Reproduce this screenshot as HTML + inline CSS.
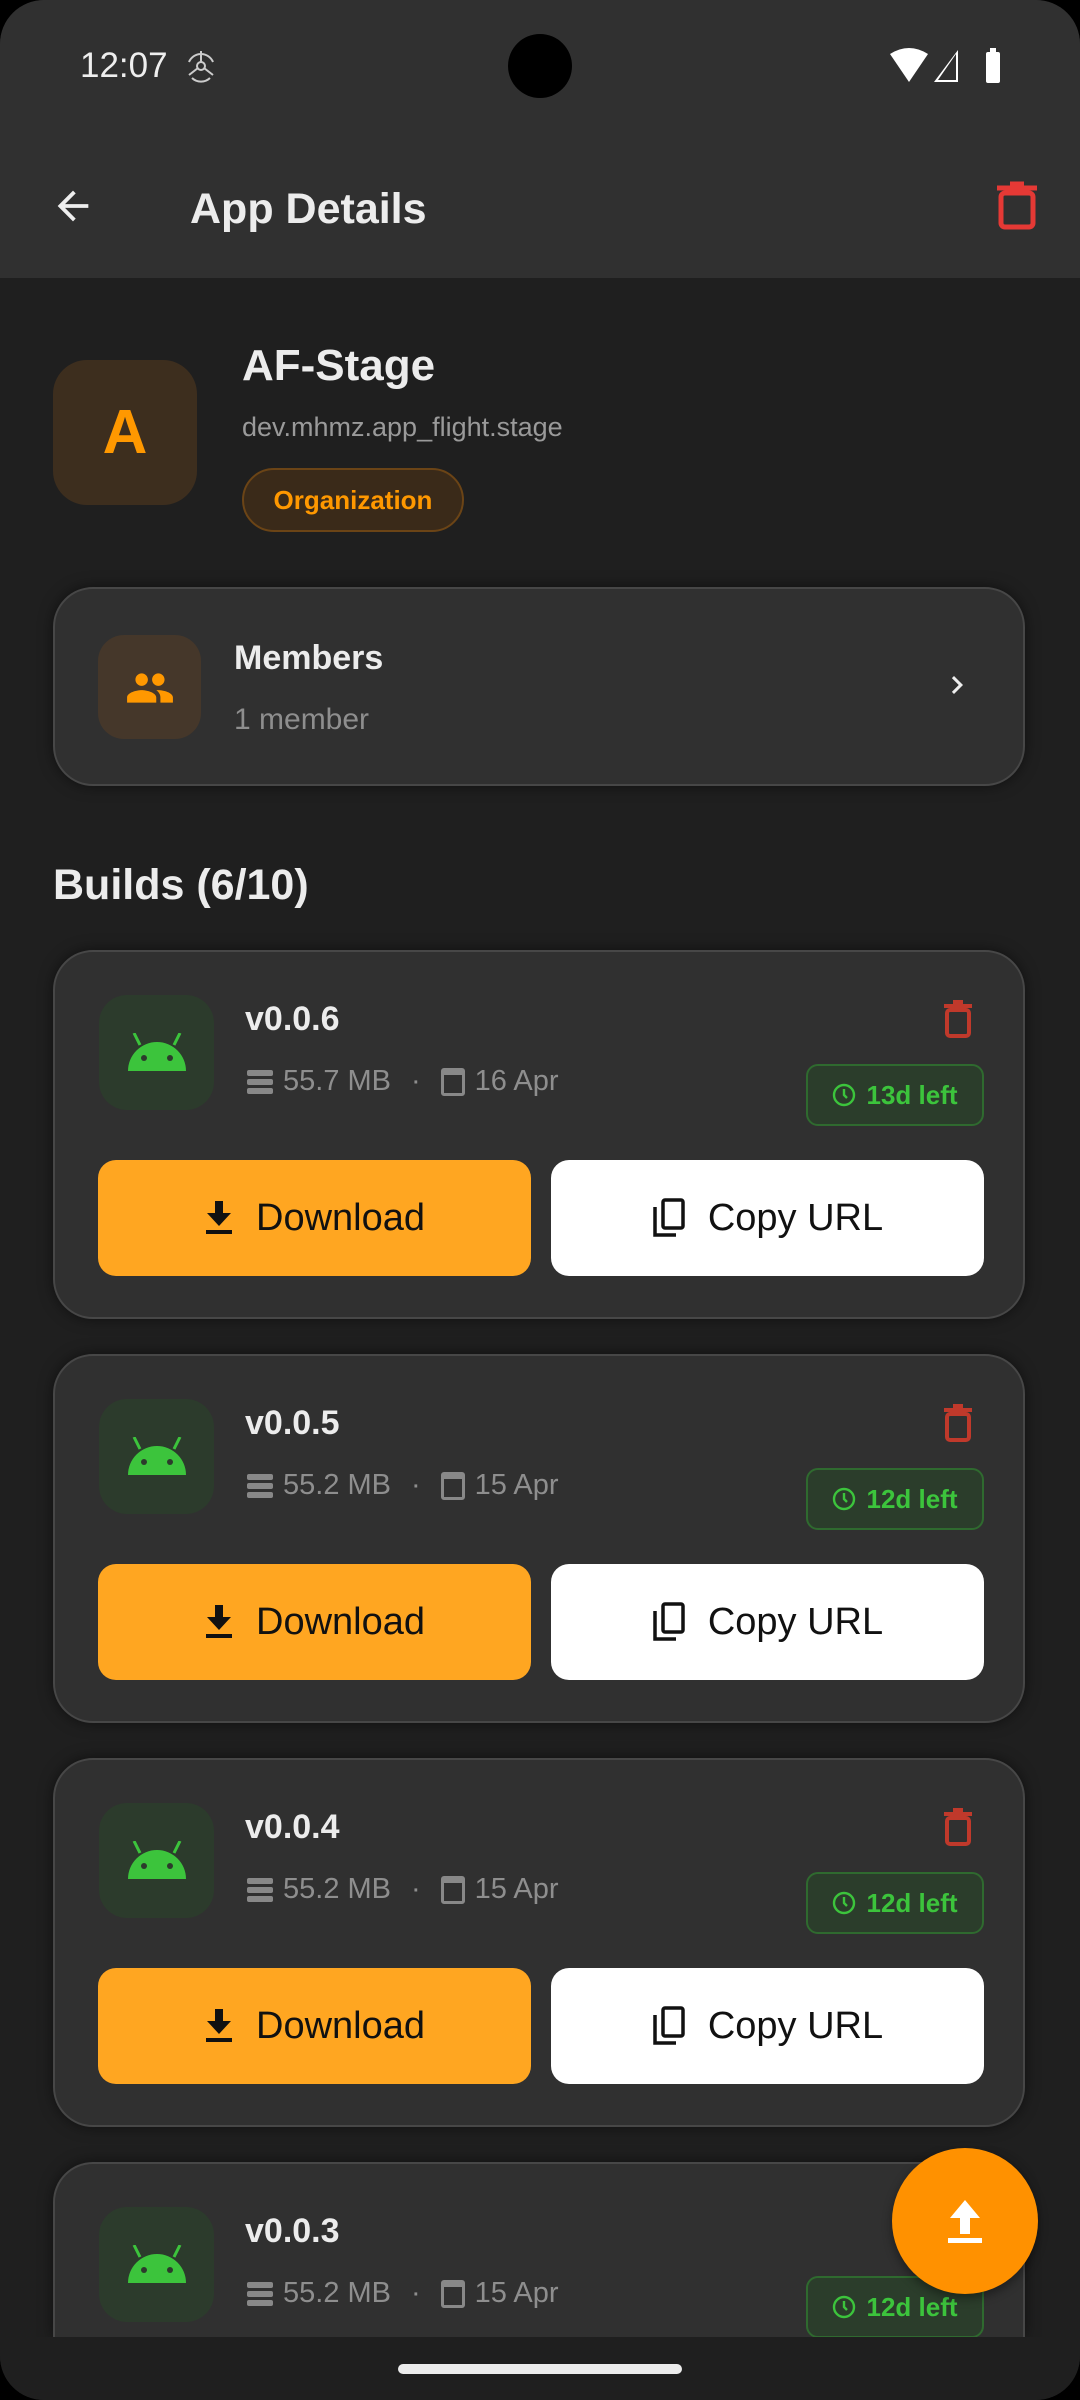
<!DOCTYPE html>
<html><head><meta charset="utf-8"><style>
*{margin:0;padding:0;box-sizing:border-box}
html,body{width:1080px;height:2400px;overflow:hidden}
body{background:#000;font-family:"Liberation Sans",sans-serif;position:relative}
.screen{position:absolute;left:0;top:0;width:1080px;height:2400px;background:#1f1f1f;border-radius:44px;overflow:hidden}
.abs{position:absolute}
.hdr{left:0;top:0;width:1080px;height:278px;background:#303030}
.card{position:absolute;left:53px;width:972px;height:369px;background:#303030;border:2px solid #474747;border-radius:40px;box-shadow:0 0 14px rgba(0,0,0,.5)}
.aic{position:absolute;left:44px;top:43px;width:115px;height:115px;background:#2c3b2c;border-radius:28px}
.ver{position:absolute;left:190px;top:48px;color:#ececec;font-weight:bold;font-size:34px}
.meta{position:absolute;left:192px;top:113px;color:#8e8e8e;font-size:29px;display:flex;align-items:center;gap:10px}
.chip{position:absolute;left:751px;top:112px;width:178px;height:62px;border:2px solid #2f6a2f;background:#2b3d2b;border-radius:12px;color:#3cc43c;font-weight:bold;font-size:26px;display:flex;align-items:center;justify-content:center;gap:10px}
.btn{position:absolute;top:208px;width:433px;height:116px;border-radius:18px;display:flex;align-items:center;justify-content:center;gap:22px;font-size:38px;color:#111}
.tr{position:absolute;left:888px;top:48px}
</style></head><body><div class="screen">
<div class="abs hdr"></div>
<div class="abs" style="left:80px;top:46px;color:#eee;font-size:35px">12:07</div>
<svg class="abs" style="left:183px;top:48px" width="36" height="36" viewBox="0 0 36 36" fill="none" stroke="#ccc" stroke-width="2"><circle cx="18" cy="18" r="4"/><path d="M18 14V3M15 20L6 27M21 20L30 27M6 14a13 13 0 0 1 24 0M9 30a13 13 0 0 0 18 0"/></svg>
<div class="abs" style="left:508px;top:34px;width:64px;height:64px;border-radius:50%;background:#000"></div>
<svg class="abs" style="left:890px;top:48px" width="115" height="36" viewBox="0 0 115 36"><path d="M0 6Q19 -6 38 6L19 34Z" fill="#fff"/><path d="M68 34V2L44 34Z" fill="#fff"/><path d="M66 6L48 32H66Z" fill="#303030"/><rect x="96" y="4" width="14" height="31" rx="2" fill="#fff"/><rect x="100" y="0" width="6" height="5" fill="#fff"/></svg>
<svg class="abs" style="left:50px;top:183px" width="46" height="46" viewBox="0 0 24 24" fill="#eee"><path d="M20 11H7.83l5.59-5.59L12 4l-8 8 8 8 1.41-1.41L7.83 13H20z"/></svg>
<div class="abs" style="left:190px;top:185px;color:#ececec;font-weight:bold;font-size:43px">App Details</div>
<svg class="abs" style="left:995px;top:180px" width="44" height="50" viewBox="0 0 44 50" fill="none" stroke="#e53935" stroke-width="5"><rect x="6" y="13" width="32" height="34" rx="4"/><path d="M2 8H42" /><path d="M15 4H29"/></svg>
<div class="abs" style="left:53px;top:360px;width:144px;height:145px;background:#3d2e1e;border-radius:34px;color:#ff9800;font-weight:bold;font-size:62px;display:flex;align-items:center;justify-content:center">A</div>
<div class="abs" style="left:242px;top:341px;color:#ececec;font-weight:bold;font-size:44px">AF-Stage</div>
<div class="abs" style="left:242px;top:412px;color:#9a9a9a;font-size:27px">dev.mhmz.app_flight.stage</div>
<div class="abs" style="left:242px;top:468px;width:222px;height:64px;border:2px solid #6b4416;background:#3a2a19;border-radius:32px;color:#ff9800;font-weight:bold;font-size:26px;display:flex;align-items:center;justify-content:center">Organization</div>
<div class="card" style="top:587px;height:199px">
<div class="abs" style="left:43px;top:46px;width:103px;height:104px;background:#45372a;border-radius:26px"></div>
<svg class="abs" style="left:70px;top:74px" width="50" height="50" viewBox="0 0 24 24" fill="#ff9800"><path d="M16 11c1.66 0 2.99-1.34 2.99-3S17.66 5 16 5c-1.66 0-3 1.34-3 3s1.34 3 3 3zm-8 0c1.66 0 2.99-1.34 2.99-3S9.66 5 8 5C6.34 5 5 6.34 5 8s1.34 3 3 3zm0 2c-2.33 0-7 1.17-7 3.5V19h14v-2.5c0-2.33-4.67-3.5-7-3.5zm8 0c-.29 0-.62.02-.97.05 1.16.84 1.97 1.97 1.97 3.45V19h6v-2.5c0-2.33-4.67-3.5-7-3.5z"/></svg>
<div class="abs" style="left:179px;top:50px;color:#ececec;font-weight:bold;font-size:34px">Members</div>
<div class="abs" style="left:179px;top:114px;color:#8e8e8e;font-size:30px">1 member</div>
<svg class="abs" style="left:884px;top:78px" width="36" height="36" viewBox="0 0 24 24" fill="#eee"><path d="M10 6L8.59 7.41 13.17 12l-4.58 4.59L10 18l6-6z"/></svg>
</div>
<div class="abs" style="left:53px;top:861px;color:#ececec;font-weight:bold;font-size:43px">Builds (6/10)</div>

<div class="card" style="top:950px"><div class="aic"><svg style="position:absolute;left:27px;top:38px" width="62" height="40" viewBox="0 0 62 40" fill="#3cc43c"><path d="M2 38A29 29 0 0 1 60 38Z"/><path d="M14 12L8 0M48 12L54 0" stroke="#3cc43c" stroke-width="3"/><circle cx="18" cy="25" r="3" fill="#2c3b2c"/><circle cx="44" cy="25" r="3" fill="#2c3b2c"/></svg></div><div class="ver">v0.0.6</div><div class="meta"><svg width="26" height="26" viewBox="0 0 26 26" fill="#888"><rect x="0" y="1" width="26" height="6" rx="2"/><rect x="0" y="10" width="26" height="6" rx="2"/><rect x="0" y="19" width="26" height="6" rx="2"/></svg><span>55.7 MB</span><span style="margin:0 10px">·</span><span style="display:inline-block;width:24px;height:28px;border:3px solid #888;border-top-width:7px;border-radius:3px"></span><span>16 Apr</span></div><svg class="tr" width="30" height="38" viewBox="0 0 30 38" fill="none" stroke="#c0392b" stroke-width="4"><rect x="4" y="10" width="22" height="26" rx="3"/><path d="M1 6H29M10 2H20"/></svg><div class="chip"><svg width="24" height="24" viewBox="0 0 24 24" fill="none" stroke="#3cc43c" stroke-width="2.4"><circle cx="12" cy="12" r="10"/><path d="M12 6V12L15 15"/></svg>13d left</div><div class="btn" style="left:43px;background:#ffa621"><svg width="30" height="34" viewBox="0 0 30 34" fill="#111"><path d="M11 0H19V12H27L15 25L3 12H11Z"/><rect x="2" y="29" width="26" height="4"/></svg>Download</div><div class="btn" style="left:496px;background:#fff"><svg width="34" height="40" viewBox="0 0 34 40" fill="none" stroke="#111" stroke-width="3.5"><rect x="11" y="2" width="20" height="28" rx="2"/><path d="M3 9V37H24"/></svg>Copy URL</div></div>

<div class="card" style="top:1354px"><div class="aic"><svg style="position:absolute;left:27px;top:38px" width="62" height="40" viewBox="0 0 62 40" fill="#3cc43c"><path d="M2 38A29 29 0 0 1 60 38Z"/><path d="M14 12L8 0M48 12L54 0" stroke="#3cc43c" stroke-width="3"/><circle cx="18" cy="25" r="3" fill="#2c3b2c"/><circle cx="44" cy="25" r="3" fill="#2c3b2c"/></svg></div><div class="ver">v0.0.5</div><div class="meta"><svg width="26" height="26" viewBox="0 0 26 26" fill="#888"><rect x="0" y="1" width="26" height="6" rx="2"/><rect x="0" y="10" width="26" height="6" rx="2"/><rect x="0" y="19" width="26" height="6" rx="2"/></svg><span>55.2 MB</span><span style="margin:0 10px">·</span><span style="display:inline-block;width:24px;height:28px;border:3px solid #888;border-top-width:7px;border-radius:3px"></span><span>15 Apr</span></div><svg class="tr" width="30" height="38" viewBox="0 0 30 38" fill="none" stroke="#c0392b" stroke-width="4"><rect x="4" y="10" width="22" height="26" rx="3"/><path d="M1 6H29M10 2H20"/></svg><div class="chip"><svg width="24" height="24" viewBox="0 0 24 24" fill="none" stroke="#3cc43c" stroke-width="2.4"><circle cx="12" cy="12" r="10"/><path d="M12 6V12L15 15"/></svg>12d left</div><div class="btn" style="left:43px;background:#ffa621"><svg width="30" height="34" viewBox="0 0 30 34" fill="#111"><path d="M11 0H19V12H27L15 25L3 12H11Z"/><rect x="2" y="29" width="26" height="4"/></svg>Download</div><div class="btn" style="left:496px;background:#fff"><svg width="34" height="40" viewBox="0 0 34 40" fill="none" stroke="#111" stroke-width="3.5"><rect x="11" y="2" width="20" height="28" rx="2"/><path d="M3 9V37H24"/></svg>Copy URL</div></div>

<div class="card" style="top:1758px"><div class="aic"><svg style="position:absolute;left:27px;top:38px" width="62" height="40" viewBox="0 0 62 40" fill="#3cc43c"><path d="M2 38A29 29 0 0 1 60 38Z"/><path d="M14 12L8 0M48 12L54 0" stroke="#3cc43c" stroke-width="3"/><circle cx="18" cy="25" r="3" fill="#2c3b2c"/><circle cx="44" cy="25" r="3" fill="#2c3b2c"/></svg></div><div class="ver">v0.0.4</div><div class="meta"><svg width="26" height="26" viewBox="0 0 26 26" fill="#888"><rect x="0" y="1" width="26" height="6" rx="2"/><rect x="0" y="10" width="26" height="6" rx="2"/><rect x="0" y="19" width="26" height="6" rx="2"/></svg><span>55.2 MB</span><span style="margin:0 10px">·</span><span style="display:inline-block;width:24px;height:28px;border:3px solid #888;border-top-width:7px;border-radius:3px"></span><span>15 Apr</span></div><svg class="tr" width="30" height="38" viewBox="0 0 30 38" fill="none" stroke="#c0392b" stroke-width="4"><rect x="4" y="10" width="22" height="26" rx="3"/><path d="M1 6H29M10 2H20"/></svg><div class="chip"><svg width="24" height="24" viewBox="0 0 24 24" fill="none" stroke="#3cc43c" stroke-width="2.4"><circle cx="12" cy="12" r="10"/><path d="M12 6V12L15 15"/></svg>12d left</div><div class="btn" style="left:43px;background:#ffa621"><svg width="30" height="34" viewBox="0 0 30 34" fill="#111"><path d="M11 0H19V12H27L15 25L3 12H11Z"/><rect x="2" y="29" width="26" height="4"/></svg>Download</div><div class="btn" style="left:496px;background:#fff"><svg width="34" height="40" viewBox="0 0 34 40" fill="none" stroke="#111" stroke-width="3.5"><rect x="11" y="2" width="20" height="28" rx="2"/><path d="M3 9V37H24"/></svg>Copy URL</div></div>

<div class="card" style="top:2162px;height:175px;border-bottom:none;border-radius:40px 40px 0 0"><div class="aic"><svg style="position:absolute;left:27px;top:38px" width="62" height="40" viewBox="0 0 62 40" fill="#3cc43c"><path d="M2 38A29 29 0 0 1 60 38Z"/><path d="M14 12L8 0M48 12L54 0" stroke="#3cc43c" stroke-width="3"/><circle cx="18" cy="25" r="3" fill="#2c3b2c"/><circle cx="44" cy="25" r="3" fill="#2c3b2c"/></svg></div><div class="ver">v0.0.3</div><div class="meta"><svg width="26" height="26" viewBox="0 0 26 26" fill="#888"><rect x="0" y="1" width="26" height="6" rx="2"/><rect x="0" y="10" width="26" height="6" rx="2"/><rect x="0" y="19" width="26" height="6" rx="2"/></svg><span>55.2 MB</span><span style="margin:0 10px">·</span><span style="display:inline-block;width:24px;height:28px;border:3px solid #888;border-top-width:7px;border-radius:3px"></span><span>15 Apr</span></div><div class="chip"><svg width="24" height="24" viewBox="0 0 24 24" fill="none" stroke="#3cc43c" stroke-width="2.4"><circle cx="12" cy="12" r="10"/><path d="M12 6V12L15 15"/></svg>12d left</div></div>

<div class="abs" style="left:0;top:2337px;width:1080px;height:63px;background:#1f1f1f"></div>
<div class="abs" style="left:398px;top:2364px;width:284px;height:10px;border-radius:5px;background:#ececec"></div>
<div class="abs" style="left:892px;top:2148px;width:146px;height:146px;border-radius:50%;background:#ff9100;box-shadow:0 4px 10px rgba(0,0,0,.4)"></div>
<svg class="abs" style="left:945px;top:2198px" width="40" height="46" viewBox="0 0 40 46" fill="#fff"><path d="M15 36H25V20H35L20 2L5 20H15Z"/><rect x="3" y="40" width="34" height="5"/></svg>
</div></body></html>
